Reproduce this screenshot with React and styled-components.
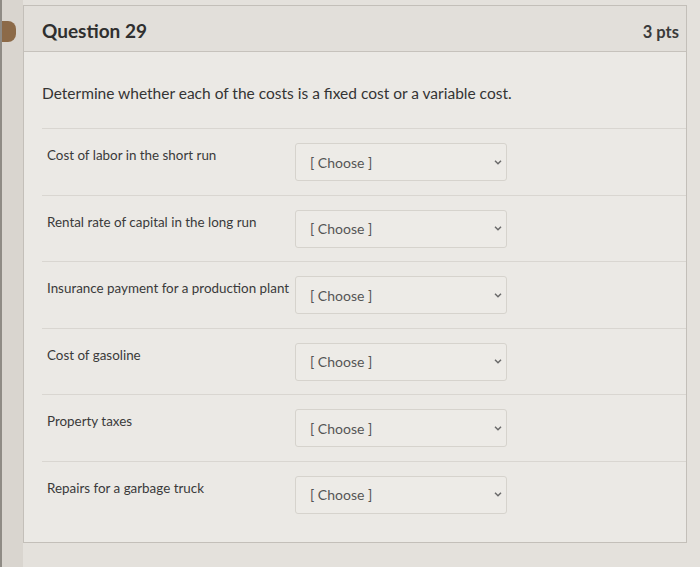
import React from "react"
import styled, { createGlobalStyle } from "styled-components"

const GlobalStyle = createGlobalStyle`
  html, body {
    margin: 0;
    padding: 0;
  }
  body {
    font-family: Lato, "Open Sans", "Liberation Sans", sans-serif;
    background: #e4e1dc;
  }
`

const Page = styled.div`
  display: flex;
  width: 700px;
  height: 567px;
  overflow: hidden;
  padding-top: 5px;
  box-sizing: border-box;
  background: #e4e1dc;
`

const Gutter = styled.div`
  width: 23px;
  flex-shrink: 0;
  border-left: 2px solid #8f8b85;
  background: #d9d5cf;
  margin-top: -5px;
  padding-top: 21px;
  box-sizing: border-box;
`

const Flag = styled.div`
  width: 14px;
  height: 21px;
  background: #8c6a48;
  border-radius: 0 8px 8px 0;
`

const Card = styled.div`
  width: 664px;
  height: 538px;
  flex-shrink: 0;
  border: 1px solid #c3bfb9;
  background: #ebe9e5;
  display: flex;
  flex-direction: column;
  box-sizing: border-box;
`

const Header = styled.div`
  height: 46px;
  flex-shrink: 0;
  display: flex;
  align-items: center;
  justify-content: space-between;
  padding: 3px 7px 0 18px;
  background: #e2dfda;
  border-bottom: 1px solid #c6c2bc;
  box-sizing: border-box;
`

const Title = styled.h2`
  margin: 0;
  font-size: 19px;
  font-weight: 700;
  color: #2f2f2f;
`

const Points = styled.span`
  font-size: 16.5px;
  font-weight: 700;
  color: #3a3a3a;
  padding-top: 4px;
`

const Body = styled.div`
  padding: 0 0 0 18px;
`

const Prompt = styled.p`
  margin: 32px 0 26px;
  font-size: 15.5px;
  color: #343434;
`

const Row = styled.div`
  display: flex;
  height: 66.6px;
  padding-left: 5px;
  border-top: 1px solid #d9d6d1;
  box-sizing: border-box;
`

const Label = styled.div`
  width: 248px;
  padding-top: 18px;
  font-size: 13.4px;
  color: #3a3a3a;
`

const Select = styled.div`
  margin-top: 14px;
  width: 212px;
  height: 38px;
  display: flex;
  align-items: center;
  justify-content: space-between;
  padding: 0 3px 0 14px;
  border: 1px solid #d6d3cd;
  border-radius: 3px;
  background: #edebe7;
  box-sizing: border-box;
  font-size: 14px;
  color: #555;
`

const Chevron = () => (
  <svg width="10" height="7" viewBox="0 0 10 7">
    <path d="M2 1.8 L5 4.8 L8 1.8" fill="none" stroke="#6a6a6a" strokeWidth="1.5" />
  </svg>
)

const costs = [
  "Cost of labor in the short run",
  "Rental rate of capital in the long run",
  "Insurance payment for a production plant",
  "Cost of gasoline",
  "Property taxes",
  "Repairs for a garbage truck",
]

const App = () => (
  <>
    <GlobalStyle />
    <Page>
      <Gutter>
        <Flag />
      </Gutter>
      <Card>
        <Header>
          <Title>Question 29</Title>
          <Points>3 pts</Points>
        </Header>
        <Body>
          <Prompt>Determine whether each of the costs is a fixed cost or a variable cost.</Prompt>
          {costs.map(c => (
            <Row key={c}>
              <Label>{c}</Label>
              <Select>
                <span>[ Choose ]</span>
                <Chevron />
              </Select>
            </Row>
          ))}
        </Body>
      </Card>
    </Page>
  </>
)

export default App
